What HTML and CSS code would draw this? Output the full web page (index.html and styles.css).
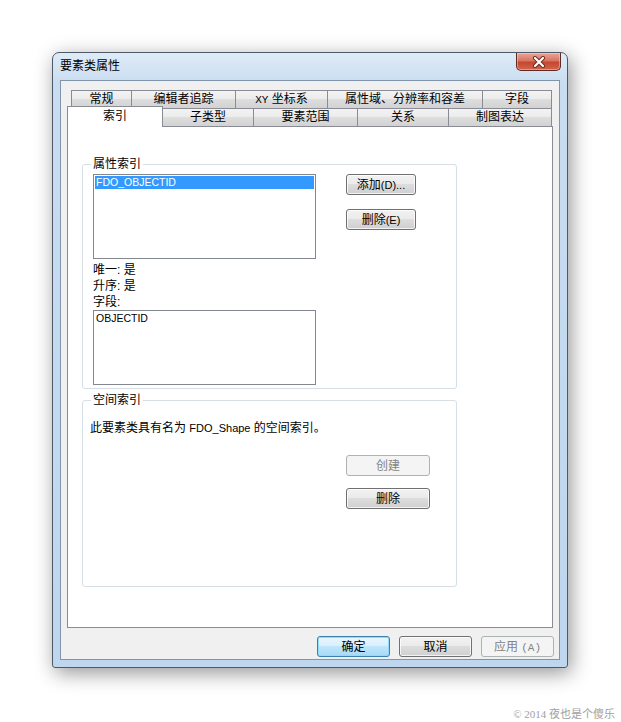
FILE: index.html
```html
<!DOCTYPE html>
<html>
<head>
	<meta charset="utf-8" />
	<title>要素类属性</title>
	<link rel="stylesheet" href="styles.css">
</head>
<body>
	<div class="window">
		<div class="titlebar">
			<span class="title">要素类属性</span>
			<span class="close">
				<svg width="14" height="12" viewBox="0 0 14 12">
					<path d="M3 2 L11 10 M11 2 L3 10" stroke="#6b2a20" stroke-width="4" stroke-linecap="round" fill="none"/>
					<path d="M3 2 L11 10 M11 2 L3 10" stroke="#fff" stroke-width="2.2" stroke-linecap="round" fill="none"/>
				</svg>
			</span>
		</div>
		<div class="client">
			<div class="tabrow row-back">
				<span class="tab t61">常规</span>
				<span class="tab t105">编辑者追踪</span>
				<span class="tab t93"><span class="mono">XY</span> 坐标系</span>
				<span class="tab t156">属性域、分辨率和容差</span>
				<span class="tab t70">字段</span>
			</div>
			<div class="tabrow row-front">
				<span class="tab tab-active t96">索引</span>
				<span class="tab t92">子类型</span>
				<span class="tab t105">要素范围</span>
				<span class="tab t92">关系</span>
				<span class="tab t104">制图表达</span>
			</div>
			<div class="panel">
				<fieldset class="group group-attr">
					<legend>属性索引</legend>
					<div class="group-body">
						<div class="col">
							<div class="listbox lb-index"><div class="item item-sel">FDO_OBJECTID</div></div>
							<div class="info first">唯一: 是</div>
							<div class="info">升序: 是</div>
							<div class="info">字段:</div>
							<div class="listbox lb-fields"><div class="item">OBJECTID</div></div>
						</div>
						<div class="btncol">
							<button class="btn b70">添加<span class="small">(D)...</span></button>
							<button class="btn b70">删除<span class="small">(E)</span></button>
						</div>
					</div>
				</fieldset>
				<fieldset class="group group-spatial">
					<legend>空间索引</legend>
					<div class="spatial-text">此要素类具有名为 <span class="small">FDO_Shape</span> 的空间索引。</div>
					<div class="spatial-btns">
						<button class="btn b84 btn-disabled">创建</button>
						<button class="btn b84">删除</button>
					</div>
				</fieldset>
			</div>
			<div class="dlg-buttons">
				<button class="btn b73 btn-default">确定</button>
				<button class="btn b73">取消</button>
				<button class="btn b73 btn-disabled">应用 <span class="mono">(A)</span></button>
			</div>
		</div>
	</div>
	<div class="footer">© 2014 夜也是个傻乐</div>
</body>
</html>
```

FILE: styles.css
```css
* { margin:0; padding:0; box-sizing:border-box; }
body { width:621px; height:722px; overflow:hidden; background:#fff; padding:52px 0 0 52px; font:12px "Liberation Sans", "Noto Sans CJK SC", sans-serif; color:#000; }

.window { width:516px; height:616px; border:1px solid #4b5968; border-radius:7px 7px 3px 3px; background:linear-gradient(#dfebf7, #c9ddf1 30px, #bed6ee); box-shadow:3px 5px 20px rgba(0,0,0,.42); padding:0 7px 7px; display:flex; flex-direction:column; }

.titlebar { height:27px; display:flex; justify-content:space-between; align-items:flex-start; }
.title { margin-top:5px; line-height:16px; }
.close { width:45px; height:18px; margin-right:-1px; border:1px solid #5e2a22; border-top:0; border-radius:0 0 5px 5px; background:linear-gradient(#eaa797, #d87462 45%, #c5472f 55%, #d3654f); display:flex; align-items:center; justify-content:center; box-shadow:inset 0 0 0 1px rgba(255,220,210,.45); }

.client { flex:1; border:1px solid #8095ab; background:#f0f0f0; padding:9px 6px 0 6px; display:flex; flex-direction:column; }

.tabrow { display:flex; align-items:flex-start; height:18px; }
.row-back { padding-left:4px; }
.tab { height:18px; margin-left:-1px; border:1px solid #898c95; border-bottom:0; background:linear-gradient(#f3f3f3, #ebebeb 50%, #dedede 50%, #d2d2d2); text-align:center; line-height:17px; white-space:nowrap; }
.tab:first-child { margin-left:0; }
.tab-active { position:relative; z-index:1; height:21px; margin-top:-2px; background:#fff; line-height:18px; }
.t61 { width:61px; } .t70 { width:70px; } .t92 { width:92px; } .t93 { width:93px; }
.t96 { width:96px; } .t104 { width:104px; } .t105 { width:105px; } .t156 { width:156px; }

.mono { font:11px "Liberation Mono", monospace; }
.small { font-size:11px; }

.panel { height:502px; background:#fff; border:1px solid #898c95; padding-left:14px; }

.group { width:375px; min-width:0; border:1px solid #d5dfe5; border-radius:3px; }
.group legend { margin-left:8px; padding:0 2px; line-height:16px; }
.group-attr { margin-top:29px; height:233px; }
.group-spatial { margin-top:3px; height:195px; }

.group-body { display:flex; gap:30px; padding:2px 0 0 10px; }
.col { width:223px; display:flex; flex-direction:column; }
.listbox { border:1px solid #828790; background:#fff; padding:1px; }
.lb-index { height:85px; }
.lb-fields { height:75px; }
.item { height:13px; line-height:13px; padding-left:1px; font-size:10.5px; }
.item-sel { background:#3399ff; color:#fff; }
.info { line-height:16px; }
.info.first { margin-top:3px; }
.btncol { display:flex; flex-direction:column; gap:14px; }

.spatial-text { margin-top:12px; padding-left:7px; line-height:16px; }
.spatial-btns { display:flex; flex-direction:column; align-items:flex-start; gap:12px; margin-top:19px; padding-left:263px; }

.btn { height:21px; font:inherit; color:#000; border:1px solid #707070; border-radius:3px; background:linear-gradient(#f2f2f2, #ebebeb 45%, #dddddd 50%, #cfcfcf); box-shadow:inset 0 0 0 1px rgba(255,255,255,.75); line-height:18px; }
.btn-default { border-color:#3c7fb1; background:linear-gradient(#eaf6fd, #d9f0fc 45%, #bee6fd 50%, #a7d9f5); box-shadow:inset 0 0 0 1px #8fdcfb; }
.btn-disabled { border-color:#adb2b5; background:#f4f4f4; color:#838383; box-shadow:none; }
.b70 { width:70px; } .b73 { width:73px; } .b84 { width:84px; }

.dlg-buttons { display:flex; justify-content:flex-end; gap:9px; margin:8px -1px 0 0; }

.footer { margin-top:37px; padding-right:6px; text-align:right; line-height:13px; font:11px "Liberation Serif", "Noto Sans CJK SC", serif; color:#a0a0a0; }
```
